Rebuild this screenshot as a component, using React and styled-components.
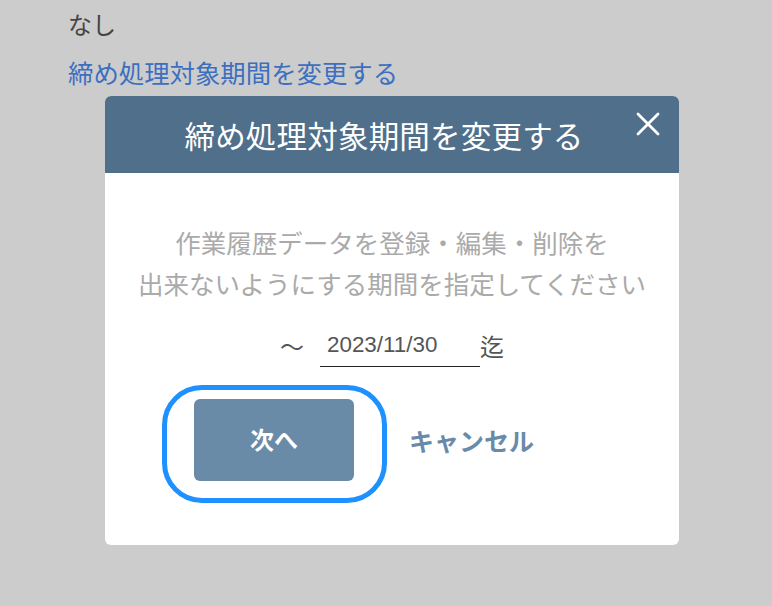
import React from "react";
import styled, { createGlobalStyle } from "styled-components";

const Global = createGlobalStyle`
  html, body { margin: 0; padding: 0; background: #cccccc; }
  body { font-family: "Liberation Sans", "Noto Sans CJK JP", sans-serif; }
  * { box-sizing: border-box; }
`;

const Page = styled.div`
  position: relative;
  width: 772px;
  height: 606px;
  overflow: hidden;
  background: #cccccc;
  padding: 7px 0 0 68px;
`;

const Line = styled.div`
  font-family: "Noto Sans CJK JP", sans-serif;
  font-size: ${(p) => (p.$link ? 25.4 : 24)}px;
  line-height: 34px;
  height: 48px;
  color: ${(p) => (p.$link ? "#3d6fc0" : "#444444")};
`;

const Modal = styled.div`
  position: absolute;
  left: 105px;
  top: 96px;
  width: 574px;
  height: 449px;
  background: #ffffff;
  border-radius: 6px;
  overflow: hidden;
  display: flex;
  flex-direction: column;
`;

const Header = styled.div`
  position: relative;
  height: 77px;
  flex: none;
  background: #4f6f8b;
  display: flex;
  align-items: center;
  justify-content: center;
  padding-right: 16px;
`;

const Title = styled.h2`
  margin: 0;
  font-family: "Noto Sans CJK JP", sans-serif;
  font-weight: 400;
  font-size: 30.5px;
  color: #ffffff;
  letter-spacing: 0.2px;
`;

const Close = styled.button`
  position: absolute;
  right: 18px;
  top: 15px;
  width: 26px;
  height: 26px;
  padding: 0;
  border: 0;
  background: none;
  display: flex;
  align-items: center;
  justify-content: center;
  cursor: pointer;
`;

const Body = styled.div`
  flex: 1;
  display: flex;
  flex-direction: column;
  align-items: center;
  padding-top: 48px;
`;

const Message = styled.p`
  margin: 0;
  text-align: center;
  font-family: "Noto Sans CJK JP", sans-serif;
  font-size: 25.5px;
  line-height: 41px;
  color: #aaaaaa;
`;

const DateRow = styled.div`
  margin-top: 21px;
  display: flex;
  align-items: center;
  height: 43px;
  padding-left: 0;
`;

const Mark = styled.span`
  font-family: "Noto Sans CJK JP", sans-serif;
  font-size: 24px;
  color: #555555;
  margin-right: ${(p) => p.$gap || 0}px;
`;

const DateInput = styled.div`
  width: 160px;
  height: 43px;
  border-bottom: 1px solid #222222;
  padding-left: 7px;
  display: flex;
  align-items: center;
  font-family: "Liberation Sans", sans-serif;
  font-size: 22.4px;
  color: #555555;
`;

const Actions = styled.div`
  align-self: flex-start;
  margin: 18px 0 0 57px;
  display: flex;
  align-items: center;
  gap: 22px;
`;

const FocusRing = styled.div`
  border: 5px solid #1e90ff;
  border-radius: 40px;
  padding: 9px 28px 17px 27px;
`;

const Primary = styled.button`
  width: 160px;
  height: 82px;
  border: 0;
  border-radius: 6px;
  background: #6a8ba8;
  color: #ffffff;
  font-family: "Noto Sans CJK JP", sans-serif;
  font-weight: 700;
  font-size: 24px;
  padding: 0 0 3px;
  cursor: pointer;
`;

const TextButton = styled.button`
  border: 0;
  background: none;
  padding: 0;
  margin-bottom: 8px;
  color: #6a8aa9;
  font-family: "Noto Sans CJK JP", sans-serif;
  font-weight: 700;
  font-size: 25px;
  cursor: pointer;
`;

export default function App() {
  return (
    <>
      <Global />
      <Page>
        <Line>なし</Line>
        <Line $link>締め処理対象期間を変更する</Line>
        <Modal>
          <Header>
            <Title>締め処理対象期間を変更する</Title>
            <Close aria-label="close">
              <svg width="24" height="24" viewBox="0 0 24 24">
                <path d="M2 2 L22 22 M22 2 L2 22" stroke="#ffffff" strokeWidth="2.8" strokeLinecap="round" />
              </svg>
            </Close>
          </Header>
          <Body>
            <Message>
              作業履歴データを登録・編集・削除を
              <br />
              出来ないようにする期間を指定してください
            </Message>
            <DateRow>
              <Mark $gap={16}>〜</Mark>
              <DateInput>2023/11/30</DateInput>
              <Mark>迄</Mark>
            </DateRow>
            <Actions>
              <FocusRing>
                <Primary>次へ</Primary>
              </FocusRing>
              <TextButton>キャンセル</TextButton>
            </Actions>
          </Body>
        </Modal>
      </Page>
    </>
  );
}
